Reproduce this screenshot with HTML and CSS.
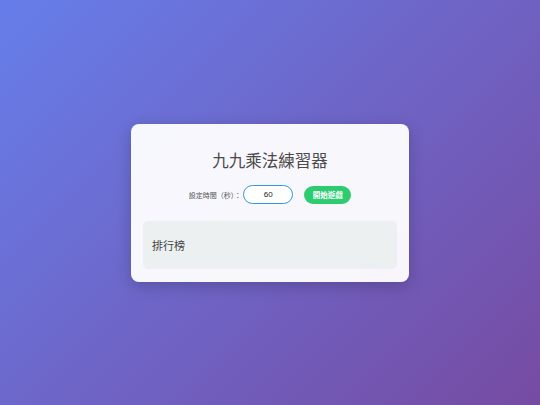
FILE: index.html
```html
<!DOCTYPE html>
<html lang="zh-Hant">
<head>
<meta charset="utf-8">
<link rel="stylesheet" href="styles.css">
</head>
<body>
<div class="card">
  <h1 class="title">九九乘法練習器</h1>
  <div class="controls">
    <label class="label">設定時間（秒）：</label>
    <input class="time-input" type="text" value="60">
    <button class="start-btn">開始遊戲</button>
  </div>
  <div class="board">
    <h3 class="board-title">排行榜</h3>
  </div>
</div>
</body>
</html>
```
FILE: styles.css
```css
html, body {
  margin: 0;
  padding: 0;
  height: 100%;
}
body {
  background: linear-gradient(135deg, #667eea 0%, #764ba2 100%);
  display: flex;
  align-items: center;
  justify-content: center;
  font-family: "Liberation Sans", "Noto Sans CJK TC", sans-serif;
}
.card {
  width: 278px;
  box-sizing: border-box;
  padding: 12px 12px 13px;
  background: rgba(255, 255, 255, 0.95);
  border-radius: 8px;
  box-shadow: 0 4px 16px rgba(0, 0, 0, 0.2);
}
.title {
  margin: 14px 0 13px;
  text-align: center;
  font-size: 16.5px;
  font-weight: normal;
  line-height: 22px;
  color: #4a4a4a;
}
.controls {
  display: flex;
  align-items: center;
  justify-content: center;
  height: 20px;
}
.label {
  font-size: 7px;
  color: #555;
  margin-right: 2px;
}
.time-input {
  box-sizing: border-box;
  width: 50px;
  height: 19px;
  border: 1px solid #3498db;
  border-radius: 10px;
  text-align: center;
  font-size: 8px;
  font-family: "Liberation Sans", sans-serif;
  color: #222;
  padding: 0;
  outline: none;
  background: #fff;
}
.start-btn {
  margin-left: 11px;
  box-sizing: border-box;
  width: 47px;
  height: 18px;
  border: none;
  border-radius: 9px;
  background: #2ecc71;
  color: #fff;
  font-size: 7.5px;
  font-weight: bold;
  font-family: "Liberation Sans", "Noto Sans CJK TC", sans-serif;
  padding: 0;
}
.board {
  margin-top: 16px;
  height: 48px;
  background: #ecf0f1;
  border-radius: 5px;
  display: flex;
  align-items: center;
  padding: 0 9px;
}
.board-title {
  margin: 0;
  font-size: 11px;
  font-weight: normal;
  color: #444;
}
```
